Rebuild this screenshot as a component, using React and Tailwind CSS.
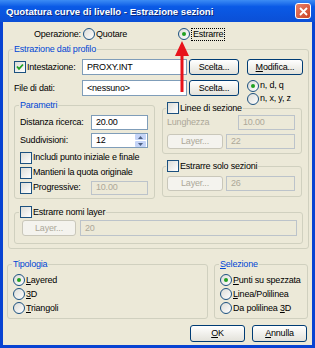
import React from "react";

const Check = ({ checked }) => (
  <span className="flex items-center justify-center w-[12px] h-[12px] shrink-0 border border-[#1C5180] bg-linear-to-br from-[#DCDCD7] to-white">
    {checked && (
      <svg width="8" height="8" viewBox="0 0 8 8">
        <path d="M1 3.5 L3 5.8 L7 1.5" stroke="#21A121" strokeWidth="1.8" fill="none" />
      </svg>
    )}
  </span>
);

const Radio = ({ checked }) => (
  <span className="flex items-center justify-center w-[12px] h-[12px] shrink-0 rounded-full border border-[#1C5180] bg-linear-to-br from-[#DCDCD7] to-white">
    {checked && <span className="w-[4px] h-[4px] rounded-full bg-[#21A121]" />}
  </span>
);

const Btn = ({ children, disabled, className = "" }) => (
  <div
    className={`flex items-center justify-center shrink-0 rounded-[3px] border ${
      disabled
        ? "border-[#C9C7BA] text-[#ACA899] bg-[#F4F3EE]"
        : "border-[#003C74] bg-linear-to-b from-white to-[#E3E2DA] text-black"
    } ${className}`}
  >
    {children}
  </div>
);

const Field = ({ children, disabled, className = "" }) => (
  <div
    className={`flex items-center shrink-0 px-[4px] border ${
      disabled ? "border-[#BCC3CA] bg-[#ECE9D8] text-[#ACA899]" : "border-[#7F9DB9] bg-white text-black"
    } ${className}`}
  >
    {children}
  </div>
);

const Group = ({ legend, legendClass = "-ml-[1px]", className = "", children }) => (
  <fieldset className={`border border-[#D0D0BF] rounded-[3px] ${className}`}>
    <legend className={`px-[1px] leading-[11px] ${legendClass}`}>{legend}</legend>
    {children}
  </fieldset>
);

const CheckLegend = ({ children }) => (
  <span className="flex items-center gap-[1px] text-black">
    <Check />
    <span>{children}</span>
  </span>
);

const RadioRow = ({ checked, children }) => (
  <div className="flex items-center h-[14px] gap-[1px]">
    <Radio checked={checked} />
    <span>{children}</span>
  </div>
);

export default function App() {
  return (
    <div className="w-[315px] h-[348px] bg-[#0843D2] flex flex-col font-['Liberation_Sans',Arial,sans-serif] text-[9px] tracking-[-0.2px] leading-[11px] text-black overflow-hidden">
      {/* title bar */}
      <div className="h-[22px] shrink-0 flex items-center justify-between pl-[6px] pr-[4px] bg-linear-to-b from-[#3C8CF4] via-[#0A5AE6] via-30% to-[#0B4FD6]">
        <span className="text-white font-bold text-[9.6px] tracking-normal [text-shadow:1px_1px_#0F2A7A]">
          Quotatura curve di livello - Estrazione sezioni
        </span>
        <div className="w-[16px] h-[16px] rounded-[3px] border border-white bg-linear-to-br from-[#E9806A] to-[#C9401F] flex items-center justify-center">
          <svg width="9" height="9" viewBox="0 0 9 9">
            <path d="M1 1 L8 8 M8 1 L1 8" stroke="white" strokeWidth="1.8" />
          </svg>
        </div>
      </div>

      {/* body */}
      <div className="relative flex-1 mx-[3px] mb-[3px] bg-[#ECE9D8] flex flex-col">
        {/* operazione */}
        <div className="flex items-center h-[12px] mt-[6px] pl-[31px]">
          <span className="w-[49px]">Operazione:</span>
          <div className="w-[95px] flex items-center gap-[1px]">
            <Radio />
            <span>Quotare</span>
          </div>
          <Radio checked />
          <span className="ml-[1px] px-[1px] border border-dotted border-black">Estrarre</span>
        </div>

        <Group
          legend={<span className="text-[#0046D5]">Estrazione dati profilo</span>}
          className="ml-[5px] w-[300px] mt-[4px] pl-[5px] pr-[5px] pb-[4px]"
        >
          <div className="flex items-center h-[16px] mt-[4px]">
            <div className="w-[68px] flex items-center gap-[1px]">
              <Check checked />
              <span>Intestazione:</span>
            </div>
            <Field className="w-[105px] h-[16px]">PROXY.INT</Field>
            <Btn className="ml-[2px] w-[50px] h-[16px]">Scelta...</Btn>
            <Btn className="ml-[8px] w-[56px] h-[16px]">
              <span><u>M</u>odifica...</span>
            </Btn>
          </div>

          <div className="flex items-start h-[16px] mt-[5px]">
            <span className="w-[68px] self-center">File di dati:</span>
            <Field className="w-[105px] h-[16px]">&lt;nessuno&gt;</Field>
            <Btn className="ml-[2px] w-[50px] h-[16px]">Scelta...</Btn>
            <div className="ml-[8px] -mt-[1px] flex flex-col">
              <div className="flex items-center h-[13px] gap-[1px]">
                <Radio checked />
                <span>n, d, q</span>
              </div>
              <div className="flex items-center h-[13px] gap-[1px]">
                <Radio />
                <span>n, x, y, z</span>
              </div>
            </div>
          </div>

          <div className="flex items-start gap-[7px] mt-[4px]">
            <Group
              legend={<span className="text-[#0046D5]">Parametri</span>}
              className="w-[141px] pl-[5px] pr-[6px] pb-[3px]"
            >
              <div className="flex items-center justify-between h-[15px] mt-[4px]">
                <span>Distanza ricerca:</span>
                <Field className="w-[57px] h-[15px]">20.00</Field>
              </div>
              <div className="flex items-center justify-between h-[15px] mt-[3px]">
                <span>Suddivisioni:</span>
                <Field className="w-[57px] h-[15px] justify-between pr-[1px]">
                  <span>12</span>
                  <div className="flex flex-col w-[11px] h-[13px] gap-[1px]">
                    <div className="flex-1 rounded-[1px] bg-[#C4D4F8] flex items-center justify-center">
                      <svg width="5" height="3" viewBox="0 0 5 3">
                        <path d="M0 3 L2.5 0 L5 3 Z" fill="#4D6185" />
                      </svg>
                    </div>
                    <div className="flex-1 rounded-[1px] bg-[#C4D4F8] flex items-center justify-center">
                      <svg width="5" height="3" viewBox="0 0 5 3">
                        <path d="M0 0 L2.5 3 L5 0 Z" fill="#4D6185" />
                      </svg>
                    </div>
                  </div>
                </Field>
              </div>
              <div className="flex items-center h-[15px] mt-[2px] gap-[1px]">
                <Check />
                <span>Includi punto iniziale e finale</span>
              </div>
              <div className="flex items-center h-[15px] gap-[1px]">
                <Check />
                <span>Mantieni la quota originale</span>
              </div>
              <div className="flex items-center justify-between h-[15px]">
                <div className="flex items-center gap-[1px]">
                  <Check />
                  <span>Progressive:</span>
                </div>
                <Field disabled className="w-[57px] h-[14px]">10.00</Field>
              </div>
            </Group>

            <div className="w-[140px] flex flex-col">
              <Group
                legend={<CheckLegend>Linee di sezione</CheckLegend>}
                className="mt-[2px] pl-[4px] pr-[6px] pb-[4px]"
              >
                <div className="flex items-center justify-between h-[15px] mt-[1px]">
                  <span className="text-[#ACA899]">Lunghezza</span>
                  <Field disabled className="w-[57px] h-[15px]">10.00</Field>
                </div>
                <div className="flex items-center h-[15px] mt-[4px]">
                  <Btn disabled className="w-[56px] h-[15px]">Layer...</Btn>
                  <Field disabled className="ml-[3px] flex-1 h-[15px]">22</Field>
                </div>
              </Group>
              <Group
                legend={<CheckLegend>Estrarre solo sezioni</CheckLegend>}
                className="mt-[6px] pl-[4px] pr-[6px] pb-[5px]"
              >
                <div className="flex items-center h-[15px] mt-[4px]">
                  <Btn disabled className="w-[56px] h-[15px]">Layer...</Btn>
                  <Field disabled className="ml-[3px] flex-1 h-[15px]">26</Field>
                </div>
              </Group>
            </div>
          </div>

          <Group
            legend={<CheckLegend>Estrarre nomi layer</CheckLegend>}
            legendClass="-ml-[3px]"
            className="mt-[7px] pl-[7px] pr-[5px] pb-[7px]"
          >
            <div className="flex items-center h-[16px] mt-[2px]">
              <Btn disabled className="w-[54px] h-[16px]">Layer...</Btn>
              <Field disabled className="ml-[4px] flex-1 h-[16px]">20</Field>
            </div>
          </Group>
        </Group>

        <div className="flex items-start mt-[10px]">
          <Group
            legend={<span className="text-[#0046D5]">Tipologia</span>}
            className="ml-[4px] w-[201px] pl-[5px] pb-[3px]"
          >
            <div className="flex flex-col mt-[3px]">
              <RadioRow checked><span><u>L</u>ayered</span></RadioRow>
              <RadioRow><span><u>3</u>D</span></RadioRow>
              <RadioRow><span><u>T</u>riangoli</span></RadioRow>
            </div>
          </Group>
          <Group
            legend={<span className="text-[#0046D5]"><u>S</u>elezione</span>}
            className="ml-[6px] w-[94px] pl-[5px] pb-[3px]"
          >
            <div className="flex flex-col mt-[3px]">
              <RadioRow checked><span><u>P</u>unti su spezzata</span></RadioRow>
              <RadioRow><span><u>L</u>inea/Polilinea</span></RadioRow>
              <RadioRow><span>Da polilinea <u>3</u>D</span></RadioRow>
            </div>
          </Group>
        </div>

        <div className="flex justify-end mt-[6px] pr-[5px]">
          <Btn className="w-[55px] h-[17px]"><span><u>O</u>K</span></Btn>
          <Btn className="ml-[7px] w-[55px] h-[17px]"><span><u>A</u>nnulla</span></Btn>
        </div>

        {/* red arrow pointing at Estrarre */}
        <svg className="absolute left-[172px] top-[19px]" width="14" height="52" viewBox="0 0 14 52">
          <path d="M7 0 L0 15 L14 15 Z" fill="#E8141B" />
          <rect x="5.5" y="14" width="3" height="37" fill="#E8141B" />
        </svg>
      </div>
    </div>
  );
}
